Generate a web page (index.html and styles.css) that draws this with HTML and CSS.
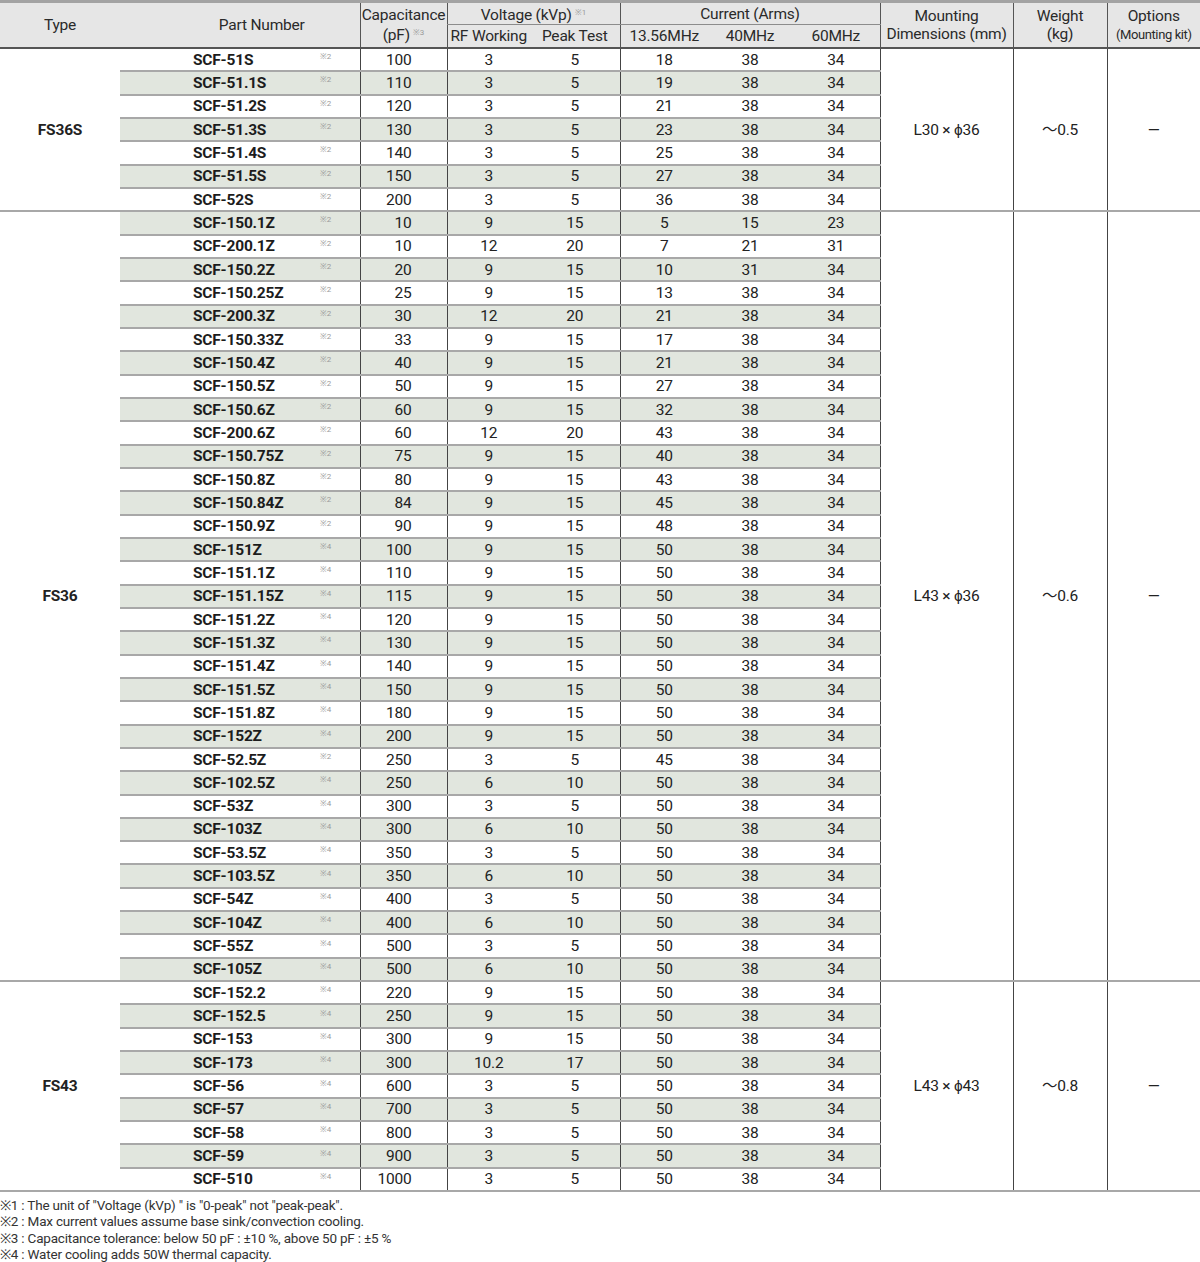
FILE: index.html
```html
<!DOCTYPE html>
<html lang="en">
<head>
<meta charset="utf-8">
<title>SCF Capacitor Specifications</title>
<link rel="stylesheet" href="styles.css">
</head>
<body>
<table class="spec">
<colgroup>
<col class="w-type"><col class="w-pn"><col class="w-nt"><col class="w-cap"><col class="w-rf"><col class="w-pk"><col class="w-c1"><col class="w-c2"><col class="w-c3"><col class="w-mnt"><col class="w-wt"><col class="w-opt">
</colgroup>
<thead>
<tr class="h1">
<th rowspan="2" class="th-type">Type</th>
<th rowspan="2" colspan="2" class="th-pn">Part Number</th>
<th rowspan="2" class="th-cap vl">Capacitance<br>(pF)<span class="sn">※3</span></th>
<th colspan="2" class="th-grp vl">Voltage (kVp)<span class="sn">※1</span></th>
<th colspan="3" class="th-grp vl">Current (Arms)</th>
<th rowspan="2" class="th-2l vl">Mounting<br>Dimensions (mm)</th>
<th rowspan="2" class="th-2l vl">Weight<br>(kg)</th>
<th rowspan="2" class="th-2l vl">Options<br><span class="small">(Mounting kit)</span></th>
</tr>
<tr class="h2">
<th class="vl">RF Working</th>
<th>Peak Test</th>
<th class="vl">13.56MHz</th>
<th>40MHz</th>
<th>60MHz</th>
</tr>
</thead>
<tbody>
<tr><td rowspan="7" class="type">FS36S</td><td class="pn">SCF-51S</td><td class="nt">※2</td><td class="cap">100</td><td class="rf">3</td><td class="pk">5</td><td class="c1">18</td><td class="c2">38</td><td class="c3">34</td><td rowspan="7" class="mnt">L30 × ϕ36</td><td rowspan="7" class="wt">～0.5</td><td rowspan="7" class="opt">—</td></tr>
<tr class="alt"><td class="pn">SCF-51.1S</td><td class="nt">※2</td><td class="cap">110</td><td class="rf">3</td><td class="pk">5</td><td class="c1">19</td><td class="c2">38</td><td class="c3">34</td></tr>
<tr><td class="pn">SCF-51.2S</td><td class="nt">※2</td><td class="cap">120</td><td class="rf">3</td><td class="pk">5</td><td class="c1">21</td><td class="c2">38</td><td class="c3">34</td></tr>
<tr class="alt"><td class="pn">SCF-51.3S</td><td class="nt">※2</td><td class="cap">130</td><td class="rf">3</td><td class="pk">5</td><td class="c1">23</td><td class="c2">38</td><td class="c3">34</td></tr>
<tr><td class="pn">SCF-51.4S</td><td class="nt">※2</td><td class="cap">140</td><td class="rf">3</td><td class="pk">5</td><td class="c1">25</td><td class="c2">38</td><td class="c3">34</td></tr>
<tr class="alt"><td class="pn">SCF-51.5S</td><td class="nt">※2</td><td class="cap">150</td><td class="rf">3</td><td class="pk">5</td><td class="c1">27</td><td class="c2">38</td><td class="c3">34</td></tr>
<tr><td class="pn">SCF-52S</td><td class="nt">※2</td><td class="cap">200</td><td class="rf">3</td><td class="pk">5</td><td class="c1">36</td><td class="c2">38</td><td class="c3">34</td></tr>

<tr class="alt"><td rowspan="33" class="type">FS36</td><td class="pn">SCF-150.1Z</td><td class="nt">※2</td><td class="cap">10</td><td class="rf">9</td><td class="pk">15</td><td class="c1">5</td><td class="c2">15</td><td class="c3">23</td><td rowspan="33" class="mnt">L43 × ϕ36</td><td rowspan="33" class="wt">～0.6</td><td rowspan="33" class="opt">—</td></tr>
<tr><td class="pn">SCF-200.1Z</td><td class="nt">※2</td><td class="cap">10</td><td class="rf">12</td><td class="pk">20</td><td class="c1">7</td><td class="c2">21</td><td class="c3">31</td></tr>
<tr class="alt"><td class="pn">SCF-150.2Z</td><td class="nt">※2</td><td class="cap">20</td><td class="rf">9</td><td class="pk">15</td><td class="c1">10</td><td class="c2">31</td><td class="c3">34</td></tr>
<tr><td class="pn">SCF-150.25Z</td><td class="nt">※2</td><td class="cap">25</td><td class="rf">9</td><td class="pk">15</td><td class="c1">13</td><td class="c2">38</td><td class="c3">34</td></tr>
<tr class="alt"><td class="pn">SCF-200.3Z</td><td class="nt">※2</td><td class="cap">30</td><td class="rf">12</td><td class="pk">20</td><td class="c1">21</td><td class="c2">38</td><td class="c3">34</td></tr>
<tr><td class="pn">SCF-150.33Z</td><td class="nt">※2</td><td class="cap">33</td><td class="rf">9</td><td class="pk">15</td><td class="c1">17</td><td class="c2">38</td><td class="c3">34</td></tr>
<tr class="alt"><td class="pn">SCF-150.4Z</td><td class="nt">※2</td><td class="cap">40</td><td class="rf">9</td><td class="pk">15</td><td class="c1">21</td><td class="c2">38</td><td class="c3">34</td></tr>
<tr><td class="pn">SCF-150.5Z</td><td class="nt">※2</td><td class="cap">50</td><td class="rf">9</td><td class="pk">15</td><td class="c1">27</td><td class="c2">38</td><td class="c3">34</td></tr>
<tr class="alt"><td class="pn">SCF-150.6Z</td><td class="nt">※2</td><td class="cap">60</td><td class="rf">9</td><td class="pk">15</td><td class="c1">32</td><td class="c2">38</td><td class="c3">34</td></tr>
<tr><td class="pn">SCF-200.6Z</td><td class="nt">※2</td><td class="cap">60</td><td class="rf">12</td><td class="pk">20</td><td class="c1">43</td><td class="c2">38</td><td class="c3">34</td></tr>
<tr class="alt"><td class="pn">SCF-150.75Z</td><td class="nt">※2</td><td class="cap">75</td><td class="rf">9</td><td class="pk">15</td><td class="c1">40</td><td class="c2">38</td><td class="c3">34</td></tr>
<tr><td class="pn">SCF-150.8Z</td><td class="nt">※2</td><td class="cap">80</td><td class="rf">9</td><td class="pk">15</td><td class="c1">43</td><td class="c2">38</td><td class="c3">34</td></tr>
<tr class="alt"><td class="pn">SCF-150.84Z</td><td class="nt">※2</td><td class="cap">84</td><td class="rf">9</td><td class="pk">15</td><td class="c1">45</td><td class="c2">38</td><td class="c3">34</td></tr>
<tr><td class="pn">SCF-150.9Z</td><td class="nt">※2</td><td class="cap">90</td><td class="rf">9</td><td class="pk">15</td><td class="c1">48</td><td class="c2">38</td><td class="c3">34</td></tr>
<tr class="alt"><td class="pn">SCF-151Z</td><td class="nt">※4</td><td class="cap">100</td><td class="rf">9</td><td class="pk">15</td><td class="c1">50</td><td class="c2">38</td><td class="c3">34</td></tr>
<tr><td class="pn">SCF-151.1Z</td><td class="nt">※4</td><td class="cap">110</td><td class="rf">9</td><td class="pk">15</td><td class="c1">50</td><td class="c2">38</td><td class="c3">34</td></tr>
<tr class="alt"><td class="pn">SCF-151.15Z</td><td class="nt">※4</td><td class="cap">115</td><td class="rf">9</td><td class="pk">15</td><td class="c1">50</td><td class="c2">38</td><td class="c3">34</td></tr>
<tr><td class="pn">SCF-151.2Z</td><td class="nt">※4</td><td class="cap">120</td><td class="rf">9</td><td class="pk">15</td><td class="c1">50</td><td class="c2">38</td><td class="c3">34</td></tr>
<tr class="alt"><td class="pn">SCF-151.3Z</td><td class="nt">※4</td><td class="cap">130</td><td class="rf">9</td><td class="pk">15</td><td class="c1">50</td><td class="c2">38</td><td class="c3">34</td></tr>
<tr><td class="pn">SCF-151.4Z</td><td class="nt">※4</td><td class="cap">140</td><td class="rf">9</td><td class="pk">15</td><td class="c1">50</td><td class="c2">38</td><td class="c3">34</td></tr>
<tr class="alt"><td class="pn">SCF-151.5Z</td><td class="nt">※4</td><td class="cap">150</td><td class="rf">9</td><td class="pk">15</td><td class="c1">50</td><td class="c2">38</td><td class="c3">34</td></tr>
<tr><td class="pn">SCF-151.8Z</td><td class="nt">※4</td><td class="cap">180</td><td class="rf">9</td><td class="pk">15</td><td class="c1">50</td><td class="c2">38</td><td class="c3">34</td></tr>
<tr class="alt"><td class="pn">SCF-152Z</td><td class="nt">※4</td><td class="cap">200</td><td class="rf">9</td><td class="pk">15</td><td class="c1">50</td><td class="c2">38</td><td class="c3">34</td></tr>
<tr><td class="pn">SCF-52.5Z</td><td class="nt">※2</td><td class="cap">250</td><td class="rf">3</td><td class="pk">5</td><td class="c1">45</td><td class="c2">38</td><td class="c3">34</td></tr>
<tr class="alt"><td class="pn">SCF-102.5Z</td><td class="nt">※4</td><td class="cap">250</td><td class="rf">6</td><td class="pk">10</td><td class="c1">50</td><td class="c2">38</td><td class="c3">34</td></tr>
<tr><td class="pn">SCF-53Z</td><td class="nt">※4</td><td class="cap">300</td><td class="rf">3</td><td class="pk">5</td><td class="c1">50</td><td class="c2">38</td><td class="c3">34</td></tr>
<tr class="alt"><td class="pn">SCF-103Z</td><td class="nt">※4</td><td class="cap">300</td><td class="rf">6</td><td class="pk">10</td><td class="c1">50</td><td class="c2">38</td><td class="c3">34</td></tr>
<tr><td class="pn">SCF-53.5Z</td><td class="nt">※4</td><td class="cap">350</td><td class="rf">3</td><td class="pk">5</td><td class="c1">50</td><td class="c2">38</td><td class="c3">34</td></tr>
<tr class="alt"><td class="pn">SCF-103.5Z</td><td class="nt">※4</td><td class="cap">350</td><td class="rf">6</td><td class="pk">10</td><td class="c1">50</td><td class="c2">38</td><td class="c3">34</td></tr>
<tr><td class="pn">SCF-54Z</td><td class="nt">※4</td><td class="cap">400</td><td class="rf">3</td><td class="pk">5</td><td class="c1">50</td><td class="c2">38</td><td class="c3">34</td></tr>
<tr class="alt"><td class="pn">SCF-104Z</td><td class="nt">※4</td><td class="cap">400</td><td class="rf">6</td><td class="pk">10</td><td class="c1">50</td><td class="c2">38</td><td class="c3">34</td></tr>
<tr><td class="pn">SCF-55Z</td><td class="nt">※4</td><td class="cap">500</td><td class="rf">3</td><td class="pk">5</td><td class="c1">50</td><td class="c2">38</td><td class="c3">34</td></tr>
<tr class="alt"><td class="pn">SCF-105Z</td><td class="nt">※4</td><td class="cap">500</td><td class="rf">6</td><td class="pk">10</td><td class="c1">50</td><td class="c2">38</td><td class="c3">34</td></tr>

<tr><td rowspan="9" class="type">FS43</td><td class="pn">SCF-152.2</td><td class="nt">※4</td><td class="cap">220</td><td class="rf">9</td><td class="pk">15</td><td class="c1">50</td><td class="c2">38</td><td class="c3">34</td><td rowspan="9" class="mnt">L43 × ϕ43</td><td rowspan="9" class="wt">～0.8</td><td rowspan="9" class="opt">—</td></tr>
<tr class="alt"><td class="pn">SCF-152.5</td><td class="nt">※4</td><td class="cap">250</td><td class="rf">9</td><td class="pk">15</td><td class="c1">50</td><td class="c2">38</td><td class="c3">34</td></tr>
<tr><td class="pn">SCF-153</td><td class="nt">※4</td><td class="cap">300</td><td class="rf">9</td><td class="pk">15</td><td class="c1">50</td><td class="c2">38</td><td class="c3">34</td></tr>
<tr class="alt"><td class="pn">SCF-173</td><td class="nt">※4</td><td class="cap">300</td><td class="rf">10.2</td><td class="pk">17</td><td class="c1">50</td><td class="c2">38</td><td class="c3">34</td></tr>
<tr><td class="pn">SCF-56</td><td class="nt">※4</td><td class="cap">600</td><td class="rf">3</td><td class="pk">5</td><td class="c1">50</td><td class="c2">38</td><td class="c3">34</td></tr>
<tr class="alt"><td class="pn">SCF-57</td><td class="nt">※4</td><td class="cap">700</td><td class="rf">3</td><td class="pk">5</td><td class="c1">50</td><td class="c2">38</td><td class="c3">34</td></tr>
<tr><td class="pn">SCF-58</td><td class="nt">※4</td><td class="cap">800</td><td class="rf">3</td><td class="pk">5</td><td class="c1">50</td><td class="c2">38</td><td class="c3">34</td></tr>
<tr class="alt"><td class="pn">SCF-59</td><td class="nt">※4</td><td class="cap">900</td><td class="rf">3</td><td class="pk">5</td><td class="c1">50</td><td class="c2">38</td><td class="c3">34</td></tr>
<tr><td class="pn">SCF-510</td><td class="nt">※4</td><td class="cap">1000</td><td class="rf">3</td><td class="pk">5</td><td class="c1">50</td><td class="c2">38</td><td class="c3">34</td></tr>
</tbody>
</table>
<ul class="notes">
<li>※1 : The unit of "Voltage (kVp) " is "0-peak" not "peak-peak".</li>
<li>※2 : Max current values assume base sink/convection cooling.</li>
<li>※3 : Capacitance tolerance: below 50 pF : ±10 %, above 50 pF : ±5 %</li>
<li>※4 : Water cooling  adds 50W thermal capacity.</li>
</ul>
</body>
</html>
```

FILE: styles.css
```css
html, body {
  margin: 0;
  padding: 0;
  background: #ffffff;
}
body {
  font-family: Roboto, "Liberation Sans", sans-serif;
  color: #222;
}
.spec {
  width: 1200px;
  table-layout: fixed;
  border-collapse: collapse;
  font-size: 15.5px;
  letter-spacing: -0.2px;
}
.w-type { width: 120px; }
.w-pn { width: 190px; }
.w-nt { width: 50px; }
.w-cap { width: 87px; }
.w-rf { width: 83px; }
.w-pk { width: 90px; }
.w-c1 { width: 88px; }
.w-c2 { width: 84px; }
.w-c3 { width: 88px; }
.w-mnt { width: 133px; }
.w-wt { width: 94px; }
.w-opt { width: 93px; }

/* header */
.spec thead th {
  background: #e6e6e6;
  font-weight: 400;
  color: #2a2a2a;
  padding: 0;
  text-align: center;
  line-height: 18px;
  white-space: nowrap;
}
.spec thead tr.h1 th {
  border-top: 3px solid #a3a3a3;
  height: 21px;
}
.spec thead tr.h2 th {
  border-bottom: 2px solid #555;
  height: 22px;
}
.spec thead tr.h1 th[rowspan] {
  border-bottom: 2px solid #555;
}
.spec thead th.vl {
  border-left: 1.5px solid #555;
}
.spec thead th.th-grp {
  border-bottom: 1.5px solid #8c8c8c;
}
.spec thead th.th-pn {
  padding-left: 44px;
}
.small {
  font-size: 13px;
  letter-spacing: -0.4px;
}
.sn {
  font-size: 8px;
  color: #9a9a9a;
  vertical-align: 5px;
  margin-left: 3px;
  letter-spacing: 0;
}

/* body */
.spec tbody tr {
  height: 23.34px;
}
.spec tbody td {
  padding: 0;
  line-height: 20px;
  text-align: center;
  white-space: nowrap;
  border-top: 2px solid #a8a8a8;
  border-bottom: 2px solid #a8a8a8;
}
.spec tbody td.type {
  font-weight: 700;
  background: #fff;
}
.spec tbody td.pn {
  text-align: left;
  padding-left: 73px;
  font-weight: 700;
  color: #1c1c1c;
}
.spec tbody td.nt {
  text-align: left;
  padding-left: 10px;
  font-size: 8px;
  color: #9a9a9a;
  vertical-align: middle;
  line-height: 12px;
  padding-bottom: 5px;
}
.spec tbody td.cap {
  text-align: right;
  padding-right: 35px;
  border-left: 1.5px solid #444;
}
.spec tbody td.rf {
  border-left: 1.5px solid #444;
}
.spec tbody td.c1 {
  border-left: 1.5px solid #444;
}
.spec tbody td.mnt {
  border-left: 1.5px solid #444;
  background: #fff;
}
.spec tbody td.wt {
  border-left: 1.5px solid #444;
  background: #fff;
  font-family: Roboto, "Noto Sans CJK JP", sans-serif;
}
.spec tbody td.opt {
  border-left: 1.5px solid #444;
  background: #fff;
}
.spec tbody tr.alt td.pn,
.spec tbody tr.alt td.nt,
.spec tbody tr.alt td.cap,
.spec tbody tr.alt td.rf,
.spec tbody tr.alt td.pk,
.spec tbody tr.alt td.c1,
.spec tbody tr.alt td.c2,
.spec tbody tr.alt td.c3 {
  background: #e1e6de;
}

/* footnotes */
.notes {
  list-style: none;
  margin: 5px 0 0;
  padding: 0;
  font-size: 13.5px;
  line-height: 16.3px;
  color: #333;
  letter-spacing: -0.2px;
}
```
